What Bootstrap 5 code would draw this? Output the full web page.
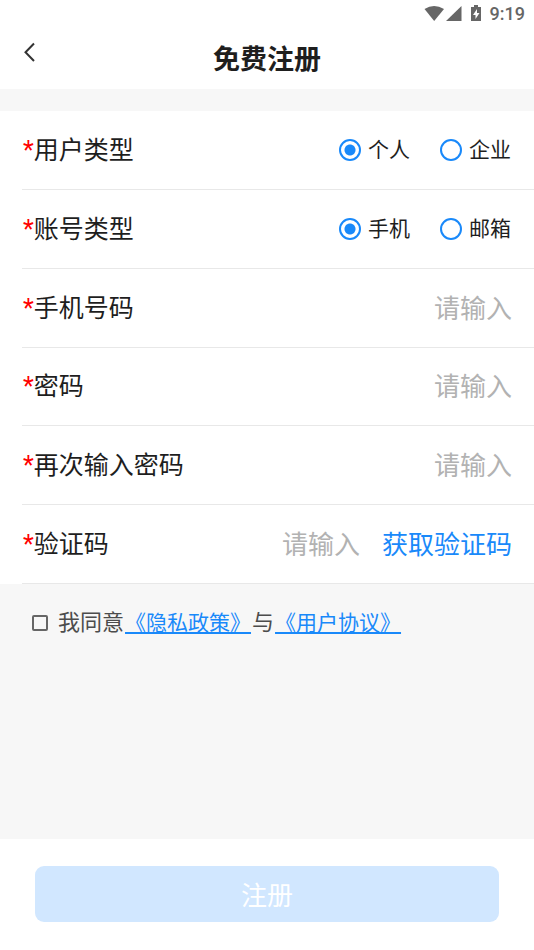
<!DOCTYPE html>
<html lang="zh-CN">
<head>
<meta charset="utf-8">
<meta name="viewport" content="width=device-width, initial-scale=1">
<title>免费注册</title>
<link href="https://cdn.jsdelivr.net/npm/bootstrap@5.3.0/dist/css/bootstrap.min.css" rel="stylesheet">
<style>
  body { font-family: Roboto, "Noto Sans CJK SC", sans-serif; background: #f7f7f7; color: #1e1e1e; }
  .status-line { height: 28px; padding: 0 9px; color: #666; font-size: 18px; font-weight: 500; line-height: 28px; }
  .title-bar { height: 61px; display: grid; grid-template-columns: 60px 1fr 60px; }
  .title-bar h1 { padding-top: 2px; font-size: 27px; line-height: 60px; font-weight: 700; }
  .back-btn { padding: 14px 22px 0; line-height: 0; color: #333; }
  .form-rows { display: grid; grid-template-columns: minmax(0, 1fr); grid-auto-rows: 1fr; min-height: 473px; margin-top: 22px; padding-left: 22px; }
  .form-line { border-bottom: 1px solid #e8e8e8; padding-right: 22px; }
  .field-name { padding: 2px 0 0 1px; font-size: 25px; line-height: 38px; white-space: nowrap; }
  .star { color: #f00; }
  .choices { column-gap: 30px; padding-right: 1px; }
  .choice { gap: 7px; font-size: 21px; line-height: 32px; }
  .choice .form-check-input { width: 22px; height: 22px; margin: 0; border: 2px solid #1989fa; background: #fff; }
  .choice .form-check-input:checked { background: radial-gradient(circle, #1989fa 5px, #fff 6px); }
  .entry { flex: 1; min-width: 0; border: 0; padding: 2px 0 0; background: none; font-size: 26px; line-height: 38px; text-align: right; outline: 0; }
  .entry::placeholder { color: #b2b2b2; opacity: 1; }
  .code-btn { margin-left: 22px; padding: 2px 0 0; border: 0; color: #1989fa; font-size: 26px; line-height: 38px; }
  .agree { padding: 22px 32px; gap: 10px; color: #4c4c4c; }
  .agree .form-check-input { width: 16px; height: 16px; margin: 0; border: 2px solid #666; border-radius: 2px; background-color: transparent; }
  .agree-text { gap: 1px; font-size: 22px; line-height: 34px; }
  .agree-text a { color: #1989fa; font-size: 21px; }
  .bottom-bar { padding: 27px 35px 28px; }
  .submit-btn { height: 56px; padding: 4px 0 0; border-radius: 9px; font-size: 26px; }
  .submit-btn:disabled { background: #d1e7ff; color: #fff; border: 0; opacity: 1; }
</style>
</head>
<body>
<div class="d-flex flex-column min-vh-100">
  <header class="bg-white">
    <div class="status-line d-flex justify-content-end align-items-center">
      <svg width="58" height="18" viewBox="0 0 58 18" fill="#666" aria-hidden="true">
        <path d="M0.500 4Q10-2 20 4L10.200 16Z"/>
        <path d="M37.500 1V16H22Z"/>
        <path fill-rule="evenodd" d="M50 0h4v2h3v14H47V2h3zM53 4l-4 6h2.500v4l4-6H53z"/>
      </svg>
      <span class="ms-2">9:19</span>
    </div>
    <div class="title-bar">
      <button type="button" class="back-btn btn border-0 d-flex align-items-start" aria-label="返回">
        <svg width="14" height="20" viewBox="0 0 14 20" fill="none" stroke="currentColor" stroke-width="2"><path d="M12 1.500L3.500 10.200L12 19"/></svg>
      </button>
      <h1 class="m-0 text-center">免费注册</h1>
    </div>
  </header>

  <main class="flex-grow-1">
    <form id="signup">
      <div class="bg-white form-rows">
        <div class="form-line d-flex align-items-center justify-content-between" role="radiogroup" aria-labelledby="user-type">
          <span class="field-name" id="user-type"><span class="star">*</span>用户类型</span>
          <div class="choices d-flex">
            <label class="choice d-flex align-items-center"><input class="form-check-input" type="radio" name="userType" checked>个人</label>
            <label class="choice d-flex align-items-center"><input class="form-check-input" type="radio" name="userType">企业</label>
          </div>
        </div>
        <div class="form-line d-flex align-items-center justify-content-between" role="radiogroup" aria-labelledby="account-type">
          <span class="field-name" id="account-type"><span class="star">*</span>账号类型</span>
          <div class="choices d-flex">
            <label class="choice d-flex align-items-center"><input class="form-check-input" type="radio" name="accountType" checked>手机</label>
            <label class="choice d-flex align-items-center"><input class="form-check-input" type="radio" name="accountType">邮箱</label>
          </div>
        </div>
        <div class="form-line d-flex align-items-center">
          <label class="field-name" for="phone"><span class="star">*</span>手机号码</label>
          <input class="entry" id="phone" type="tel" placeholder="请输入">
        </div>
        <div class="form-line d-flex align-items-center">
          <label class="field-name" for="pwd"><span class="star">*</span>密码</label>
          <input class="entry" id="pwd" type="password" placeholder="请输入">
        </div>
        <div class="form-line d-flex align-items-center">
          <label class="field-name" for="pwd2"><span class="star">*</span>再次输入密码</label>
          <input class="entry" id="pwd2" type="password" placeholder="请输入">
        </div>
        <div class="form-line d-flex align-items-center">
          <label class="field-name" for="code"><span class="star">*</span>验证码</label>
          <input class="entry" id="code" type="text" placeholder="请输入">
          <button type="button" class="btn code-btn">获取验证码</button>
        </div>
      </div>
      <div class="agree d-flex align-items-center">
        <input class="form-check-input flex-shrink-0" type="checkbox" id="agree">
        <div class="agree-text d-flex flex-wrap align-items-baseline">
          <label for="agree">我同意</label><a href="#privacy">《隐私政策》</a><span>与</span><a href="#terms">《用户协议》</a>
        </div>
      </div>
    </form>
  </main>

  <footer class="bottom-bar bg-white">
    <button type="submit" form="signup" class="btn submit-btn w-100 d-block" disabled>注册</button>
  </footer>
</div>
<script src="https://cdn.jsdelivr.net/npm/bootstrap@5.3.0/dist/js/bootstrap.bundle.min.js"></script>
</body>
</html>
